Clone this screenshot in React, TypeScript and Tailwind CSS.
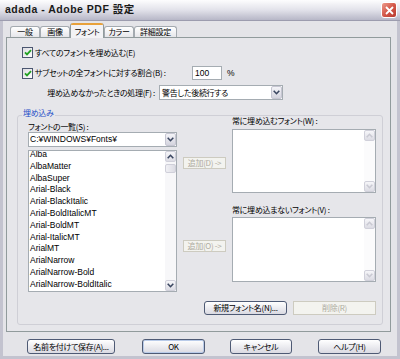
import React from "react";

const JP = "font-['Noto_Sans_CJK_JP',sans-serif] [font-feature-settings:'palt'] text-[8px] tracking-[-0.3px] whitespace-nowrap text-black";
const LAT = "font-['Liberation_Sans','Noto_Sans_CJK_JP',sans-serif] text-[8.5px] whitespace-nowrap text-black";

const fonts = [
  "Alba",
  "AlbaMatter",
  "AlbaSuper",
  "Arial-Black",
  "Arial-BlackItalic",
  "Arial-BoldItalicMT",
  "Arial-BoldMT",
  "Arial-ItalicMT",
  "ArialMT",
  "ArialNarrow",
  "ArialNarrow-Bold",
  "ArialNarrow-BoldItalic",
];

function Chevron({ up, disabled }: { up?: boolean; disabled?: boolean }) {
  return (
    <svg width="7" height="5" viewBox="0 0 7 5">
      <path
        d={up ? "M0.7 4.2 L3.5 1.3 L6.3 4.2" : "M0.7 0.8 L3.5 3.7 L6.3 0.8"}
        fill="none"
        stroke={disabled ? "#c9c9d2" : "#3a4660"}
        strokeWidth="1.6"
      />
    </svg>
  );
}

function ArrowBtn({ up, disabled, tall }: { up?: boolean; disabled?: boolean; tall?: boolean }) {
  return (
    <div
      className={
        tall
          ? "w-[11px] h-[13px] shrink-0 rounded-[2px] border border-[#c6c6d2] bg-gradient-to-b from-[#f4f4f8] to-[#d4d4de] flex items-center justify-center"
          : "w-[11px] h-[11px] shrink-0 rounded-[2px] border border-[#d0d0da] bg-gradient-to-b from-[#f6f6f9] to-[#dcdce4] flex items-center justify-center"
      }
    >
      <Chevron up={up} disabled={disabled} />
    </div>
  );
}

function Checkbox() {
  return (
    <div className="w-[11px] h-[11px] shrink-0 border border-[#4b5670] bg-gradient-to-br from-[#dcdce2] to-white flex items-center justify-center">
      <svg width="8" height="7" viewBox="0 0 8 7">
        <path d="M1 3.4 L3 5.4 L7 1.2" fill="none" stroke="#21a121" strokeWidth="1.8" />
      </svg>
    </div>
  );
}

function Button({
  label,
  className,
  disabled,
  primary,
}: {
  label: string;
  className: string;
  disabled?: boolean;
  primary?: boolean;
}) {
  const base = disabled
    ? "border border-[#cdcbc0] bg-[#f3f3ef]"
    : primary
    ? "rounded-[3px] border border-[#4e5a74] bg-gradient-to-b from-white to-[#dadae2] shadow-[inset_0_0_0_1px_#b9cbe9]"
    : "rounded-[3px] border border-[#4e5a74] bg-gradient-to-b from-white to-[#dadae2]";
  return (
    <div className={`${className} ${base} flex items-center justify-center shrink-0`}>
      <span
        className={
          disabled
            ? "font-['Noto_Sans_CJK_JP',sans-serif] [font-feature-settings:'palt'] text-[8px] tracking-[-0.3px] whitespace-nowrap text-[#aeab9f] leading-none"
            : "font-['Noto_Sans_CJK_JP',sans-serif] [font-feature-settings:'palt'] text-[8px] tracking-[-0.3px] whitespace-nowrap text-black leading-none"
        }
      >
        {label}
      </span>
    </div>
  );
}

function Tab({ label, w, active }: { label: string; w: string; active?: boolean }) {
  if (active) {
    return (
      <div
        className={`${w} h-[15px] -mb-px relative z-10 rounded-t-[3px] border-x border-[#919b9c] bg-[#f3f3f5] flex flex-col`}
      >
        <div className="h-[2px] rounded-t-[2px] bg-[#e8a13a]" />
        <div className={`${JP} flex-1 flex items-center justify-center leading-none`}>{label}</div>
      </div>
    );
  }
  return (
    <div
      className={`${w} h-[11px] rounded-t-[3px] border border-b-0 border-[#a4aab0] bg-gradient-to-b from-white to-[#e6e6ea] flex items-center justify-center`}
    >
      <span className={`${JP} leading-none`}>{label}</span>
    </div>
  );
}

function EmptyList({ h }: { h: string }) {
  return (
    <div className={`${h} border border-[#a5acb2] bg-white flex justify-end`}>
      <div className="w-[11px] flex flex-col justify-between bg-[#fbfbfc]">
        <ArrowBtn up disabled />
        <ArrowBtn disabled />
      </div>
    </div>
  );
}

export default function App() {
  return (
    <div className="w-[400px] h-[359px] bg-[#c3c3cf] flex flex-col overflow-hidden">
      {/* Title bar */}
      <div className="h-[21px] shrink-0 flex items-center pl-[5px] bg-gradient-to-b from-[#fdfdfe] via-[#e2e2ea] to-[#b7b7c7] border-b border-[#9c9cae]">
        <span className="font-['Liberation_Sans','Noto_Sans_CJK_JP',sans-serif] text-[10.5px] font-bold text-[#1a1a1a] tracking-[0.5px]">
          adada - Adobe PDF 設定
        </span>
        <div className="ml-auto mr-[3px] w-[16px] h-[16px] rounded-[3px] border border-white bg-gradient-to-br from-[#ec9a8c] via-[#d3584a] to-[#b83a2e] flex items-center justify-center">
          <svg width="9" height="9" viewBox="0 0 9 9">
            <path d="M1 1 L8 8 M8 1 L1 8" stroke="white" strokeWidth="1.8" />
          </svg>
        </div>
      </div>

      {/* Body */}
      <div className="flex-1 mx-[3px] mb-[3px] bg-[#e4e4e8] flex flex-col">
        {/* Tabs */}
        <div className="h-[16px] shrink-0 flex items-end pl-[7px]">
          <Tab label="一般" w="w-[30px]" />
          <Tab label="画像" w="w-[30px]" />
          <Tab label="フォント" w="w-[34px]" active />
          <Tab label="カラー" w="w-[30px]" />
          <Tab label="詳細設定" w="w-[43px]" />
        </div>

        {/* Panel */}
        <div className="ml-[3px] w-[385px] h-[295px] shrink-0 border border-[#919b9c] bg-[#e6e6ea] flex flex-col">
          <div className="mt-[9px] h-[11px] pl-[15px] flex items-center">
            <Checkbox />
            <span className={`${JP} ml-[2px] leading-none`}>すべてのフォントを埋め込む(E)</span>
          </div>

          <div className="mt-[8px] h-[14px] pl-[15px] flex items-center">
            <Checkbox />
            <span className={`${JP} ml-[2px] w-[157px] leading-none`}>サブセットの全フォントに対する割合(B) :</span>
            <div className="w-[30px] h-[14px] border border-[#a5acb2] bg-white flex items-center pl-[2px]">
              <span className={`${LAT} leading-none`}>100</span>
            </div>
            <span className={`${LAT} ml-[5px] leading-none`}>%</span>
          </div>

          <div className="mt-[5px] h-[15px] pl-[31px] flex items-center">
            <span className={`${JP} w-[117px] text-right leading-none`}>埋め込めなかったときの処理(F) :</span>
            <div className="ml-[4px] w-[124px] h-[15px] border border-[#a5acb2] bg-white flex items-center">
              <span className={`${JP} flex-1 pl-[2px] leading-none`}>警告した後続行する</span>
              <ArrowBtn tall />
            </div>
          </div>

          {/* Group box */}
          <div className="mt-[15px] ml-[10px] w-[366px] h-[210px] relative rounded-[3px] border border-[#cfcfd6] flex">
            <span className="absolute left-[4px] top-[-7px] px-[1px] bg-[#e6e6ea] font-['Noto_Sans_CJK_JP',sans-serif] [font-feature-settings:'palt'] text-[8px] tracking-[-0.3px] text-[#1f4fc8] leading-none">
              埋め込み
            </span>

            {/* Left column */}
            <div className="ml-[10px] mt-[5px] w-[149px] flex flex-col">
              <div className={`${JP} h-[11px] leading-[11px]`}>フォントの一覧(S) :</div>
              <div className="h-[15px] border border-[#a5acb2] bg-white flex items-center">
                <span className={`${LAT} flex-1 pl-[1px] leading-none`}>C:¥WINDOWS¥Fonts¥</span>
                <ArrowBtn tall />
              </div>
              <div className="mt-[3px] h-[142px] border border-[#a5acb2] bg-white flex overflow-hidden">
                <div className={`${LAT} flex-1 pl-[1px] -mt-[2px] leading-[11.8px]`}>
                  {fonts.map((f) => (
                    <div key={f}>{f}</div>
                  ))}
                </div>
                <div className="w-[11px] flex flex-col bg-[#f7f7f9]">
                  <ArrowBtn up />
                  <div className="mt-[2px] h-[9px] rounded-[2px] border border-[#cfcfd9] bg-gradient-to-r from-[#f0f0f4] to-[#dcdce4]" />
                  <div className="flex-1" />
                  <ArrowBtn />
                </div>
              </div>
            </div>

            {/* Right area */}
            <div className="ml-[6px] w-[193px] flex flex-col">
              <div className="flex">
                <div className="w-[43px] flex flex-col">
                  <Button label="追加(D) ->" className="mt-[41px] w-[43px] h-[12px]" disabled />
                  <Button label="追加(O) ->" className="mt-[71px] w-[43px] h-[12px]" disabled />
                </div>
                <div className="ml-[6px] w-[144px] flex flex-col">
                  <div className={`${JP} h-[10px] leading-[10px]`}>常に埋め込むフォント(W) :</div>
                  <div className="mt-[3px]">
                    <EmptyList h="h-[64px]" />
                  </div>
                  <div className={`${JP} mt-[12px] h-[10px] leading-[10px]`}>常に埋め込まないフォント(V) :</div>
                  <div className="mt-[2px]">
                    <EmptyList h="h-[65px]" />
                  </div>
                </div>
              </div>
              <div className="mt-[19px] flex justify-end gap-[6px]">
                <Button label="新規フォント名(N)..." className="w-[83px] h-[14px]" />
                <Button label="削除(R)" className="w-[83px] h-[14px]" disabled />
              </div>
            </div>
          </div>
        </div>

        {/* Bottom buttons */}
        <div className="mt-[7px] h-[15px] flex">
          <Button label="名前を付けて保存(A)..." className="ml-[24px] w-[88px] h-[15px]" />
          <Button label="OK" className="ml-[27px] w-[63px] h-[15px]" primary />
          <Button label="キャンセル" className="ml-[25px] w-[62px] h-[15px]" />
          <Button label="ヘルプ(H)" className="ml-[26px] w-[63px] h-[15px]" />
        </div>
      </div>
    </div>
  );
}
